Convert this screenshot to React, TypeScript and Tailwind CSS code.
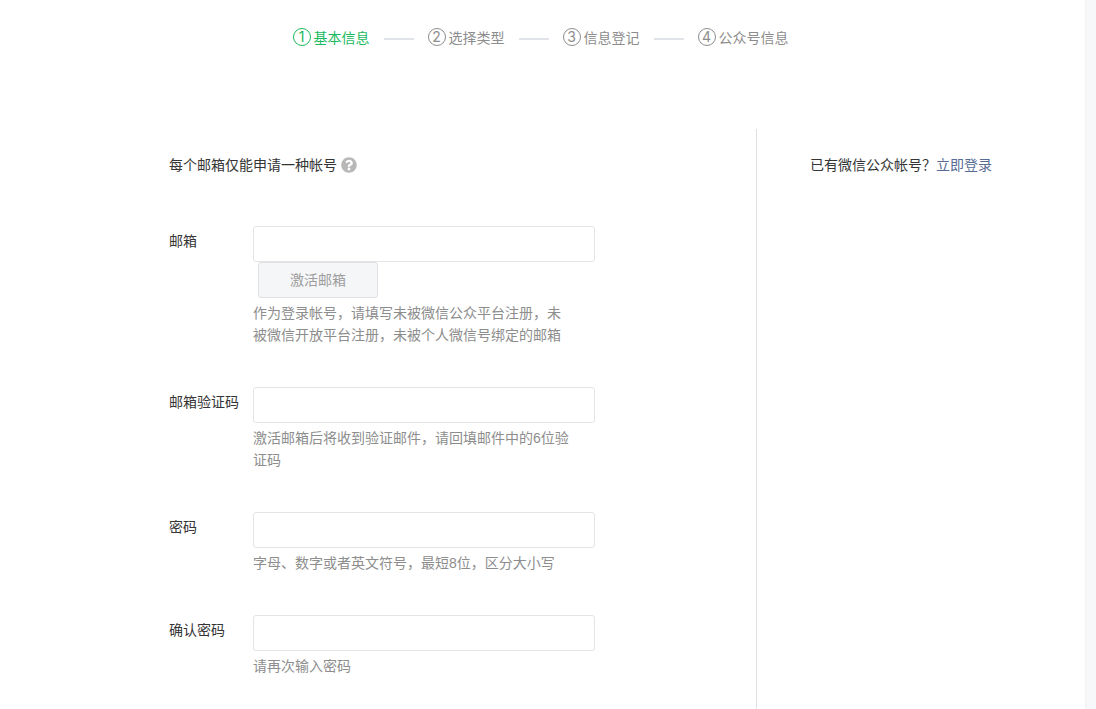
import { useState, ReactNode, FormEvent } from 'react';
import { FaQuestionCircle } from 'react-icons/fa';

const steps = ['基本信息', '选择类型', '信息登记', '公众号信息'];

function Steps({ current }: { current: number }) {
  return (
    <ol className="flex justify-center pt-[27px] pr-1 leading-[22px]">
      {steps.map((step, i) => (
        <li
          key={step}
          className={`flex items-center ${i === current ? 'text-[#1aba5e]' : 'text-[#8d8d8d]'}`}
        >
          {i > 0 && <span className="mx-[14px] mt-[2px] h-[2px] w-[30px] bg-[#e0e4e8]" />}
          <span className="mr-[3px] mb-[2px] flex size-[18px] items-center justify-center rounded-full border border-current font-['Inter',sans-serif]">
            {i + 1}
          </span>
          {step}
        </li>
      ))}
    </ol>
  );
}

type FieldProps = {
  id: string;
  label: string;
  hint: string;
  type?: string;
  value: string;
  onChange: (value: string) => void;
  children?: ReactNode;
};

function Field({ id, label, hint, type = 'text', value, onChange, children }: FieldProps) {
  return (
    <div className="flex">
      <label htmlFor={id} className="mt-1 w-[84px] shrink-0">
        {label}
      </label>
      <div className="flex w-[342px] flex-col items-start">
        <input
          id={id}
          type={type}
          value={value}
          onChange={(e) => onChange(e.target.value)}
          aria-describedby={`${id}-hint`}
          className="h-9 w-full rounded-[3px] border border-[#e4e4e4] bg-white px-2.5 outline-none"
        />
        {children}
        <p id={`${id}-hint`} className="mt-1 w-80 text-[#8d8d8d]">
          {hint}
        </p>
      </div>
    </div>
  );
}

function App() {
  const [form, setForm] = useState({ email: '', code: '', password: '', confirm: '' });

  const update = (key: string) => (value: string) => setForm({ ...form, [key]: value });

  const handleSubmit = (e: FormEvent) => {
    e.preventDefault();
  };

  return (
    <div className="min-h-screen bg-[#f6f8f9] pr-[11px] font-['Liberation_Sans','Noto_Sans_CJK_SC',sans-serif] text-sm leading-[22px] text-[#353535]">
      <div className="flex min-h-screen flex-col bg-white shadow-[0_1px_3px_rgba(0,0,0,0.06)]">
        <Steps current={0} />
        <main className="mt-20 flex flex-1">
          <form onSubmit={handleSubmit} className="flex-1 pt-[25px] pb-8 pl-[169px]">
            <p className="flex items-center gap-1">
              每个邮箱仅能申请一种帐号
              <FaQuestionCircle className="size-4 text-[#b8b8b8]" />
            </p>
            <div className="mt-[50px] flex flex-col gap-[41px]">
              <Field
                id="email"
                label="邮箱"
                hint="作为登录帐号，请填写未被微信公众平台注册，未被微信开放平台注册，未被个人微信号绑定的邮箱"
                value={form.email}
                onChange={update('email')}
              >
                <button
                  type="button"
                  disabled={!form.email}
                  className="ml-[5px] h-9 w-[120px] rounded-[3px] border border-[#dfe1e4] bg-[#f5f6f8] text-[#9d9d9d]"
                >
                  激活邮箱
                </button>
              </Field>
              <Field
                id="code"
                label="邮箱验证码"
                hint="激活邮箱后将收到验证邮件，请回填邮件中的6位验证码"
                value={form.code}
                onChange={update('code')}
              />
              <Field
                id="password"
                label="密码"
                type="password"
                hint="字母、数字或者英文符号，最短8位，区分大小写"
                value={form.password}
                onChange={update('password')}
              />
              <Field
                id="confirm"
                label="确认密码"
                type="password"
                hint="请再次输入密码"
                value={form.confirm}
                onChange={update('confirm')}
              />
            </div>
          </form>
          <aside className="w-[329px] border-l border-[#e0e1e5] pt-[25px] pl-[53px]">
            已有微信公众帐号？
            <a href="#login" className="text-[#576b95]">
              立即登录
            </a>
          </aside>
        </main>
      </div>
    </div>
  );
}

export default App;
